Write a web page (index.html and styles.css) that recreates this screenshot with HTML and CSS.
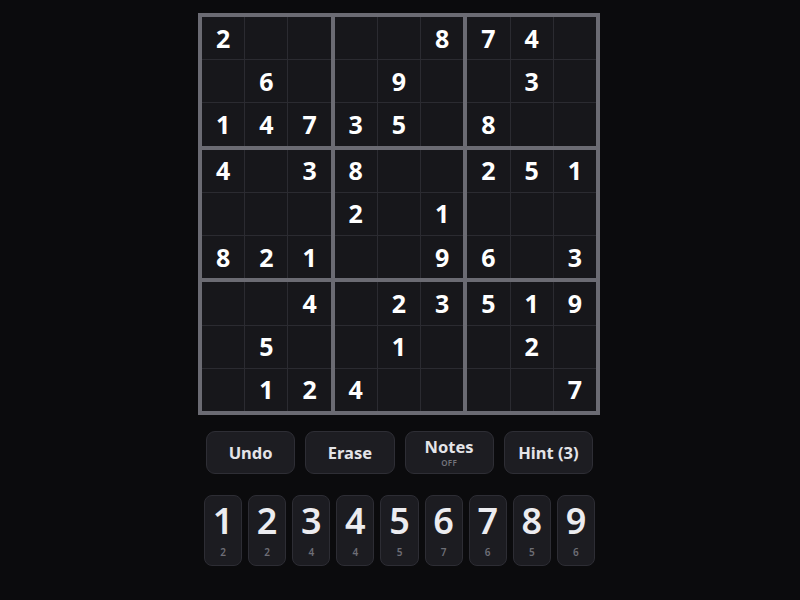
FILE: index.html
```
<!DOCTYPE html>
<html>
<head>
<meta charset="utf-8">
<link rel="stylesheet" href="styles.css">
</head>
<body>
<main class="app">
  <div class="board">
    <div class="box"><div class="cell">2</div><div class="cell"></div><div class="cell"></div><div class="cell"></div><div class="cell">6</div><div class="cell"></div><div class="cell">1</div><div class="cell">4</div><div class="cell">7</div></div>
    <div class="box"><div class="cell"></div><div class="cell"></div><div class="cell">8</div><div class="cell"></div><div class="cell">9</div><div class="cell"></div><div class="cell">3</div><div class="cell">5</div><div class="cell"></div></div>
    <div class="box"><div class="cell">7</div><div class="cell">4</div><div class="cell"></div><div class="cell"></div><div class="cell">3</div><div class="cell"></div><div class="cell">8</div><div class="cell"></div><div class="cell"></div></div>
    <div class="box"><div class="cell">4</div><div class="cell"></div><div class="cell">3</div><div class="cell"></div><div class="cell"></div><div class="cell"></div><div class="cell">8</div><div class="cell">2</div><div class="cell">1</div></div>
    <div class="box"><div class="cell">8</div><div class="cell"></div><div class="cell"></div><div class="cell">2</div><div class="cell"></div><div class="cell">1</div><div class="cell"></div><div class="cell"></div><div class="cell">9</div></div>
    <div class="box"><div class="cell">2</div><div class="cell">5</div><div class="cell">1</div><div class="cell"></div><div class="cell"></div><div class="cell"></div><div class="cell">6</div><div class="cell"></div><div class="cell">3</div></div>
    <div class="box"><div class="cell"></div><div class="cell"></div><div class="cell">4</div><div class="cell"></div><div class="cell">5</div><div class="cell"></div><div class="cell"></div><div class="cell">1</div><div class="cell">2</div></div>
    <div class="box"><div class="cell"></div><div class="cell">2</div><div class="cell">3</div><div class="cell"></div><div class="cell">1</div><div class="cell"></div><div class="cell">4</div><div class="cell"></div><div class="cell"></div></div>
    <div class="box"><div class="cell">5</div><div class="cell">1</div><div class="cell">9</div><div class="cell"></div><div class="cell">2</div><div class="cell"></div><div class="cell"></div><div class="cell"></div><div class="cell">7</div></div>
  </div>

  <div class="actions">
    <button class="action">Undo</button>
    <button class="action">Erase</button>
    <button class="action action-notes"><span class="main">Notes</span><span class="sub">OFF</span></button>
    <button class="action">Hint (3)</button>
  </div>

  <div class="pad">
    <button class="key"><span class="num">1</span><span class="left">2</span></button>
    <button class="key"><span class="num">2</span><span class="left">2</span></button>
    <button class="key"><span class="num">3</span><span class="left">4</span></button>
    <button class="key"><span class="num">4</span><span class="left">4</span></button>
    <button class="key"><span class="num">5</span><span class="left">5</span></button>
    <button class="key"><span class="num">6</span><span class="left">7</span></button>
    <button class="key"><span class="num">7</span><span class="left">6</span></button>
    <button class="key"><span class="num">8</span><span class="left">5</span></button>
    <button class="key"><span class="num">9</span><span class="left">6</span></button>
  </div>
</main>
</body>
</html>
```

FILE: styles.css
```
html, body {
  margin: 0;
  padding: 0;
  background: #0b0b0d;
  font-family: "Noto Sans", "Open Sans", sans-serif;
}

.app {
  width: 402px;
  margin: 13px auto 0;
  display: flex;
  flex-direction: column;
  position: relative;
  left: -1px;
}

.board {
  box-sizing: border-box;
  width: 402px;
  height: 402px;
  border: 4px solid #6b6b73;
  background: #6b6b73;
  display: grid;
  grid-template-columns: repeat(3, 1fr);
  grid-template-rows: repeat(3, 1fr);
  gap: 4px;
}

.box {
  display: grid;
  grid-template-columns: repeat(3, 1fr);
  grid-template-rows: repeat(3, 1fr);
  gap: 1px;
  background: #2b2b31;
}

.cell {
  background: #17171b;
  color: #ffffff;
  font-weight: 700;
  font-size: 25px;
  display: flex;
  align-items: center;
  justify-content: center;
  line-height: 1;
}

.actions {
  display: flex;
  gap: 10px;
  padding: 0 7px 0 8px;
  margin-top: 16px;
}

.action {
  flex: 1;
  height: 43px;
  background: #1d1d22;
  border: 1px solid #2e2e35;
  border-radius: 9px;
  color: #e4e4e8;
  font-family: "Noto Sans", "Open Sans", sans-serif;
  font-weight: 700;
  font-size: 16.5px;
  display: flex;
  flex-direction: column;
  align-items: center;
  justify-content: center;
  padding: 0;
}

.action-notes .main {
  line-height: 18px;
}

.action-notes .sub {
  font-size: 8px;
  font-weight: 600;
  color: #75757d;
  line-height: 8px;
  margin-top: 3px;
  letter-spacing: 0.3px;
}

.pad {
  display: flex;
  gap: 6px;
  padding: 0 5px 0 6px;
  margin-top: 21px;
}

.key {
  flex: 1;
  height: 71px;
  background: #1c1c21;
  border: 1px solid #2d2d34;
  border-radius: 8px;
  padding: 0;
  display: flex;
  flex-direction: column;
  align-items: center;
  font-family: "Noto Sans", "Open Sans", sans-serif;
}

.num {
  color: #ececf0;
  font-size: 36px;
  font-weight: 600;
  line-height: 1;
  margin-top: 7px;
}

.left {
  color: #6e6e76;
  font-size: 10px;
  font-weight: 600;
  line-height: 1;
  margin-top: 8px;
}
```
